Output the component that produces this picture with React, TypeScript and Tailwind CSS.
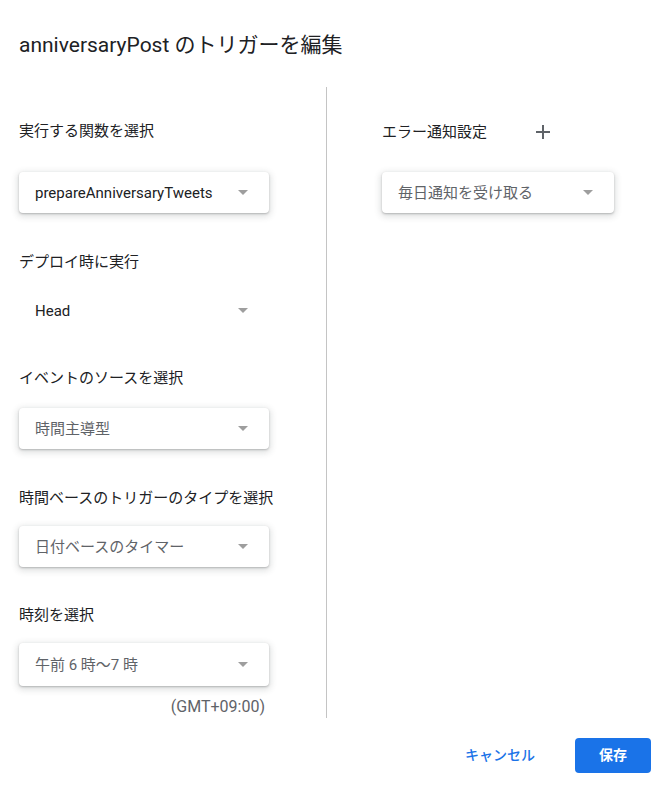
import React from "react";

const font = { fontFamily: 'Roboto, "Noto Sans CJK JP", sans-serif' };

function Arrow() {
  return (
    <svg width="10" height="5" viewBox="0 0 10 5" className="shrink-0">
      <path d="M0 0 L10 0 L5 5 Z" fill="#9e9e9e" />
    </svg>
  );
}

function Select({
  text,
  dark,
  shadow = true,
  w = "w-[250px]",
  h = "h-[41px]",
  className = "",
}: {
  text: string;
  dark?: boolean;
  shadow?: boolean;
  w?: string;
  h?: string;
  className?: string;
}) {
  return (
    <div
      className={`${w} ${h} ${className} flex items-center justify-between pl-[16px] pr-[21px] rounded-[4px] bg-white ${
        shadow
          ? "shadow-[0_1px_2px_rgba(60,64,67,0.3),0_2px_6px_2px_rgba(60,64,67,0.15)]"
          : ""
      }`}
    >
      <span
        className={`text-[15px] leading-[20px] ${
          dark ? "text-[#202124]" : "text-[#5f6368]"
        }`}
      >
        {text}
      </span>
      <Arrow />
    </div>
  );
}

function Label({ children, className = "" }: { children: React.ReactNode; className?: string }) {
  return (
    <div className={`text-[15px] leading-[20px] text-[#202124] ${className}`}>{children}</div>
  );
}

export default function App() {
  return (
    <div className="w-[670px] h-[799px] bg-white" style={font}>
      <div className="pt-[31px] pl-[19px] text-[21px] leading-[28px] text-[#202124]">
        anniversaryPost のトリガーを編集
      </div>
      <div className="flex mt-[28px] h-[631px]">
        <div className="w-[326px] shrink-0 pl-[19px] pt-[34px]">
          <Label>実行する関数を選択</Label>
          <Select className="mt-[31px]" text="prepareAnniversaryTweets" dark />
          <Label className="mt-[39px]">デプロイ時に実行</Label>
          <Select className="mt-[18px]" text="Head" dark shadow={false} />
          <Label className="mt-[37px]">イベントのソースを選択</Label>
          <Select className="mt-[20px]" text="時間主導型" />
          <Label className="mt-[39px]">時間ベースのトリガーのタイプを選択</Label>
          <Select className="mt-[18px]" text="日付ベースのタイマー" />
          <Label className="mt-[38px]">時刻を選択</Label>
          <Select className="mt-[18px]" h="h-[43px]" text="午前 6 時～7 時" />
          <div className="w-[246px] mt-[11px] text-right text-[16px] leading-[20px] text-[#5f6368]">
            (GMT+09:00)
          </div>
        </div>
        <div className="w-px shrink-0 bg-[#c4c4c4]" />
        <div className="pl-[55px] pt-[35px]">
          <div className="flex items-center h-[20px]">
            <Label>エラー通知設定</Label>
            <svg width="14" height="14" viewBox="0 0 14 14" className="ml-[49px]">
              <path d="M7 0 V14 M0 7 H14" stroke="#5f6368" strokeWidth="2" />
            </svg>
          </div>
          <Select className="mt-[30px]" w="w-[232px]" text="毎日通知を受け取る" />
        </div>
      </div>
      <div className="flex justify-end items-center mt-[20px] pr-[19px]">
        <button className="h-[35px] px-[8px] text-[14px] font-medium text-[#1a73e8] mr-[32px]">
          キャンセル
        </button>
        <button className="h-[35px] w-[76px] rounded-[4px] bg-[#1a73e8] text-white text-[14px] font-bold">
          保存
        </button>
      </div>
    </div>
  );
}
